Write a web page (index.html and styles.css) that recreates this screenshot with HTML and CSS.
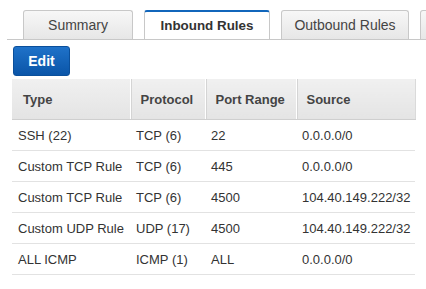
FILE: index.html
```html
<!DOCTYPE html>
<html>
<head>
    <title>Security Group</title>
    <link rel="stylesheet" href="styles.css">
</head>
<body>
    <div class="tabs">
        <div class="tab tab-summary">Summary</div>
        <div class="tab tab-inbound active">Inbound Rules</div>
        <div class="tab tab-outbound">Outbound Rules</div>
        <div class="tab tab-more"></div>
    </div>
    <div class="panel">
        <button class="edit">Edit</button>
        <table class="rules">
            <colgroup>
                <col class="col-type">
                <col class="col-proto">
                <col class="col-port">
                <col class="col-source">
            </colgroup>
            <thead>
                <tr>
                    <th class="th-first">Type</th>
                    <th>Protocol</th>
                    <th>Port Range</th>
                    <th class="th-last">Source</th>
                </tr>
            </thead>
            <tbody>
                <tr><td>SSH (22)</td><td>TCP (6)</td><td>22</td><td>0.0.0.0/0</td></tr>
                <tr><td>Custom TCP Rule</td><td>TCP (6)</td><td>445</td><td>0.0.0.0/0</td></tr>
                <tr><td>Custom TCP Rule</td><td>TCP (6)</td><td>4500</td><td>104.40.149.222/32</td></tr>
                <tr><td>Custom UDP Rule</td><td>UDP (17)</td><td>4500</td><td>104.40.149.222/32</td></tr>
                <tr><td>ALL ICMP</td><td>ICMP (1)</td><td>ALL</td><td>0.0.0.0/0</td></tr>
            </tbody>
        </table>
    </div>
</body>
</html>
```

FILE: styles.css
```css
body {
    margin: 0;
    background-color: #fff;
    color: #333;
    font-family: "Liberation Sans", Arial, sans-serif;
    font-size: 13px;
}

.tabs {
    display: flex;
    gap: 11px;
    margin-left: 7px;
    padding: 10px 0 0 16px;
    border-bottom: 1px solid #c8c8c8;
    height: 29px;
    overflow: hidden;
}

.tab {
    box-sizing: border-box;
    height: 30px;
    flex: none;
    border: 1px solid #c8c8c8;
    border-bottom: none;
    border-radius: 3px 3px 0 0;
    background: linear-gradient(#f7f7f7, #e6e6e6);
    color: #444;
    font-size: 14px;
    text-align: center;
    line-height: 29px;
}

.tab-summary { width: 110px; }
.tab-inbound { width: 126px; }
.tab-outbound { width: 128px; }
.tab-more { width: 40px; }

.tab.active {
    background: #fff;
    border-top: 2px solid #1166bb;
    color: #333;
    font-weight: bold;
    font-size: 13.4px;
    line-height: 28px;
}

.panel {
    padding: 6px 0 0 12px;
}

.edit {
    display: block;
    margin-left: 1px;
    width: 57px;
    height: 30px;
    border: 1px solid #0a4f9b;
    border-radius: 3px;
    background: linear-gradient(#1f72c9, #0a55a8);
    color: #fff;
    font-family: inherit;
    font-size: 14px;
    font-weight: bold;
    padding: 0;
}

.rules {
    margin-top: 3px;
    width: 403px;
    border-collapse: collapse;
    table-layout: fixed;
}

.col-type { width: 118px; }
.col-proto { width: 75px; }
.col-port { width: 91px; }
.col-source { width: 119px; }

.rules th {
    height: 40px;
    padding: 0 0 0 10px;
    text-align: left;
    font-weight: bold;
    color: #444;
    background: linear-gradient(#f0f0f0, #e4e4e4);
    border-left: 1px solid #fff;
    border-bottom: 1px solid #cfcfcf;
    box-shadow: inset 1px 0 0 #d4d4d4;
}

.rules th.th-first {
    border-left: none;
    box-shadow: none;
    padding-left: 11px;
}

.rules th.th-last {
    border-right: 1px solid #dadada;
}

.rules td {
    height: 30px;
    padding: 0 0 0 6px;
    border-bottom: 1px solid #e2e2e2;
    white-space: nowrap;
    overflow: hidden;
}
```
